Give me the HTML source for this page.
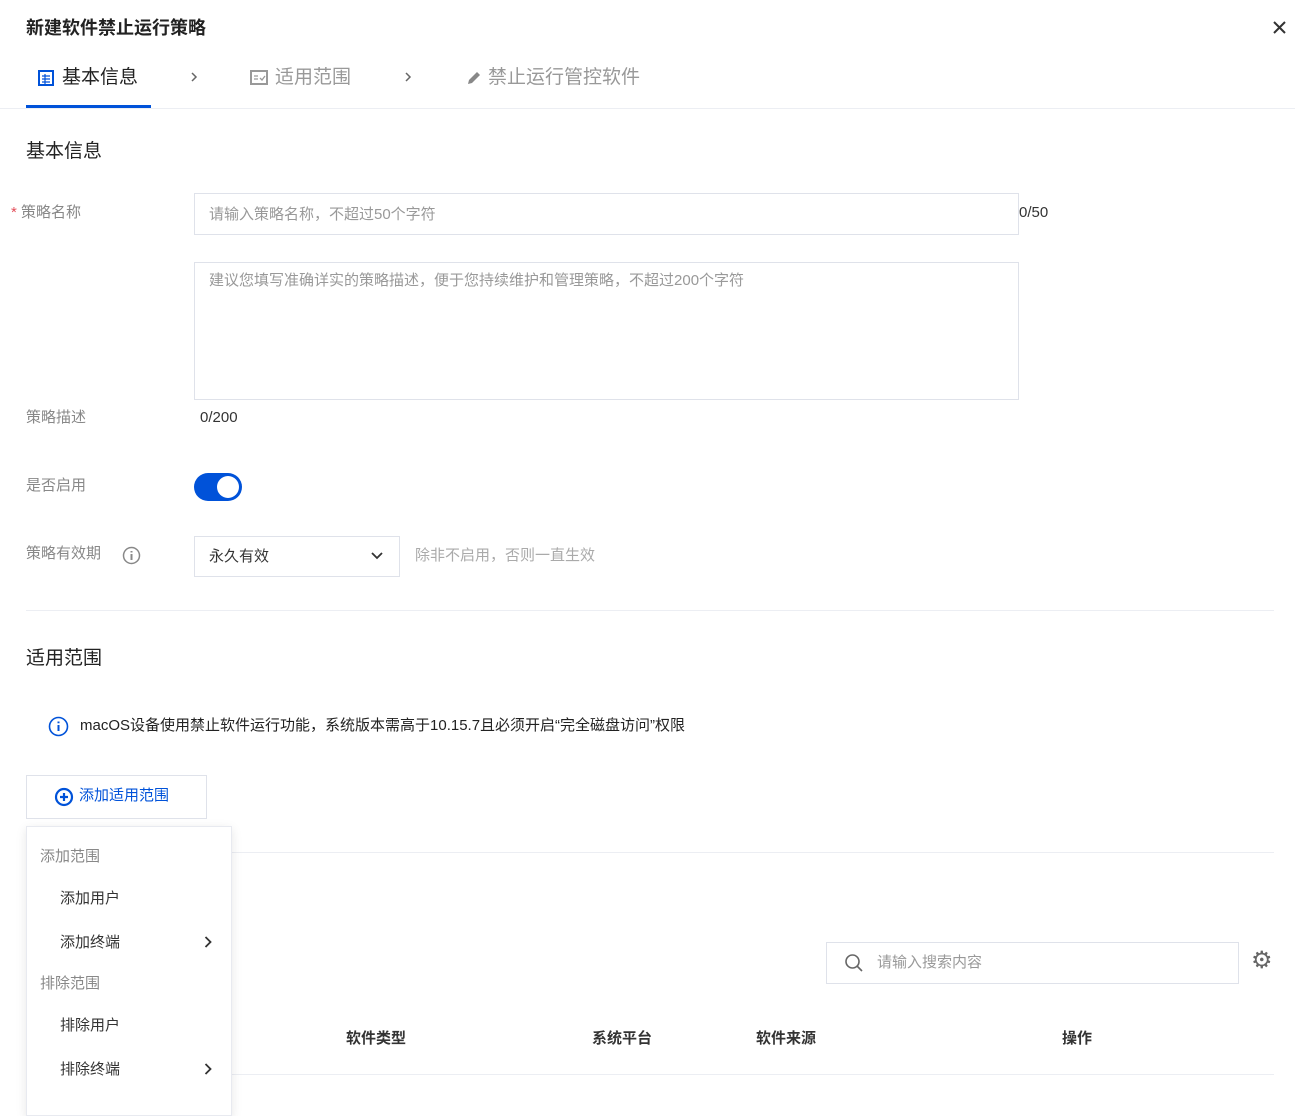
<!DOCTYPE html>
<html><head><meta charset="utf-8"><style>
*{box-sizing:border-box;margin:0;padding:0}
body{width:1295px;height:1100px;overflow:hidden;background:#fff;font-family:"Liberation Sans","Noto Sans CJK SC",sans-serif;position:relative;color:#333}
.a{position:absolute;white-space:nowrap;line-height:1.36}
.lbl{font-size:15px;color:#888}
.inp{position:absolute;border:1px solid #dfe2ea;background:#fff}
.ph{color:#999;font-size:15px}
.line{position:absolute;height:1px;background:#eceef3}
.mi{font-size:15px;color:#333}
</style></head><body>
<div class="a" style="left:26px;top:16px;font-size:18px;font-weight:bold;color:#222">新建软件禁止运行策略</div>
<svg class="a" style="left:1273px;top:21px" width="13" height="13"><path d="M1 1l11 11M12 1L1 12" stroke="#333" stroke-width="2"/></svg>
<svg class="a" style="left:38px;top:70px" width="16" height="16"><rect x="1" y="1" width="14" height="14" fill="none" stroke="#0052d9" stroke-width="2"/><path d="M4 6h8M4 9h8M4 12h8M7 4v10" stroke="#0052d9" stroke-width="1.2"/></svg>
<div class="a" style="left:62px;top:65px;font-size:19px;color:#222">基本信息</div>
<svg class="a" style="left:191px;top:72px" width="7" height="10"><path d="M1 1l4 4-4 4" stroke="#666" stroke-width="1.5" fill="none"/></svg>
<svg class="a" style="left:250px;top:70px" width="18" height="15"><rect x="1" y="1" width="16" height="13" fill="none" stroke="#999" stroke-width="2"/><path d="M4 6h4M4 9h4M10 8l2 2 3-4" stroke="#999" stroke-width="1.3" fill="none"/></svg>
<div class="a" style="left:275px;top:65px;font-size:19px;color:#999">适用范围</div>
<svg class="a" style="left:405px;top:72px" width="7" height="10"><path d="M1 1l4 4-4 4" stroke="#666" stroke-width="1.5" fill="none"/></svg>
<svg class="a" style="left:466px;top:70px" width="16" height="16"><path d="M2 14l1-4 8-8 3 3-8 8z" fill="#888"/></svg>
<div class="a" style="left:488px;top:65px;font-size:19px;color:#999">禁止运行管控软件</div>
<div class="a" style="left:26px;top:105px;width:125px;height:3px;background:#0052d9"></div>
<div class="line" style="left:0;top:108px;width:1295px"></div>
<div class="a" style="left:26px;top:139px;font-size:19px;color:#222">基本信息</div>
<div class="a lbl" style="left:11px;top:203px"><span style="color:#e34d59">*</span> 策略名称</div>
<div class="inp" style="left:194px;top:193px;width:825px;height:42px"><span class="a ph" style="left:14px;top:11px">请输入策略名称，不超过50个字符</span></div>
<div class="a" style="left:1019px;top:203px;font-size:15px">0/50</div>
<div class="inp" style="left:194px;top:262px;width:825px;height:138px"><span class="a ph" style="left:14px;top:8px">建议您填写准确详实的策略描述，便于您持续维护和管理策略，不超过200个字符</span></div>
<div class="a lbl" style="left:26px;top:408px">策略描述</div>
<div class="a" style="left:200px;top:408px;font-size:15px">0/200</div>
<div class="a lbl" style="left:26px;top:476px">是否启用</div>
<div class="a" style="left:194px;top:473px;width:48px;height:28px;border-radius:14px;background:#0052d9"><div class="a" style="left:23px;top:3px;width:22px;height:22px;border-radius:50%;background:#fff"></div></div>
<div class="a lbl" style="left:26px;top:544px">策略有效期</div>
<svg class="a" style="left:122px;top:546px" width="19" height="19"><circle cx="9.5" cy="9.5" r="8" fill="none" stroke="#888" stroke-width="1.5"/><path d="M9.5 8v6M9.5 5v1.5" stroke="#888" stroke-width="2"/></svg>
<div class="inp" style="left:194px;top:536px;width:206px;height:41px"><span class="a" style="left:14px;top:10px;font-size:15px">永久有效</span><svg class="a" style="left:176px;top:14px" width="12" height="10"><path d="M1 2l5 5 5-5" stroke="#333" stroke-width="1.8" fill="none"/></svg></div>
<div class="a ph" style="left:415px;top:546px;color:#aaa">除非不启用，否则一直生效</div>
<div class="line" style="left:26px;top:610px;width:1248px"></div>
<div class="a" style="left:26px;top:646px;font-size:19px;color:#222">适用范围</div>
<svg class="a" style="left:48px;top:716px" width="21" height="21"><circle cx="10.5" cy="10.5" r="9" fill="none" stroke="#0052d9" stroke-width="1.6"/><path d="M10.5 9v6M10.5 5.5v1.8" stroke="#0052d9" stroke-width="2"/></svg>
<div class="a" style="left:80px;top:716px;font-size:15px;color:#222">macOS设备使用禁止软件运行功能，系统版本需高于10.15.7且必须开启“完全磁盘访问”权限</div>
<div class="inp" style="left:26px;top:775px;width:181px;height:44px"><svg class="a" style="left:27px;top:11px" width="20" height="20"><circle cx="10" cy="10" r="8" fill="none" stroke="#0052d9" stroke-width="2.2"/><path d="M10 6v8M6 10h8" stroke="#0052d9" stroke-width="2.2"/></svg><span class="a" style="left:52px;top:10px;font-size:15px;color:#0052d9">添加适用范围</span></div>
<div class="line" style="left:232px;top:852px;width:1042px"></div>
<div class="inp" style="left:826px;top:942px;width:413px;height:42px"><svg class="a" style="left:17px;top:10px" width="20" height="20"><circle cx="8.5" cy="8.5" r="6.5" fill="none" stroke="#666" stroke-width="1.6"/><path d="M13 13l5 5" stroke="#666" stroke-width="1.6"/></svg><span class="a ph" style="left:50px;top:10px">请输入搜索内容</span></div>
<div class="a" style="left:1251px;top:945px;font-size:24px;color:#666">⚙</div>
<div class="a" style="left:346px;top:1029px;font-size:15px;font-weight:bold">软件类型</div>
<div class="a" style="left:592px;top:1029px;font-size:15px;font-weight:bold">系统平台</div>
<div class="a" style="left:756px;top:1029px;font-size:15px;font-weight:bold">软件来源</div>
<div class="a" style="left:1062px;top:1029px;font-size:15px;font-weight:bold">操作</div>
<div class="line" style="left:232px;top:1074px;width:1042px"></div>
<div class="a" style="left:26px;top:826px;width:206px;height:290px;background:#fff;border:1px solid #e8eaf0;box-shadow:0 3px 10px rgba(0,0,0,.1)">
<div class="a" style="left:13px;top:20px;font-size:15px;color:#888">添加范围</div>
<div class="a mi" style="left:33px;top:62px">添加用户</div>
<div class="a mi" style="left:33px;top:106px">添加终端</div>
<svg class="a" style="left:177px;top:109px" width="8" height="12"><path d="M1.5 1l5 5-5 5" stroke="#333" stroke-width="1.8" fill="none"/></svg>
<div class="a" style="left:13px;top:147px;font-size:15px;color:#888">排除范围</div>
<div class="a mi" style="left:33px;top:189px">排除用户</div>
<div class="a mi" style="left:33px;top:233px">排除终端</div>
<svg class="a" style="left:177px;top:236px" width="8" height="12"><path d="M1.5 1l5 5-5 5" stroke="#333" stroke-width="1.8" fill="none"/></svg>
</div>
</body></html>
